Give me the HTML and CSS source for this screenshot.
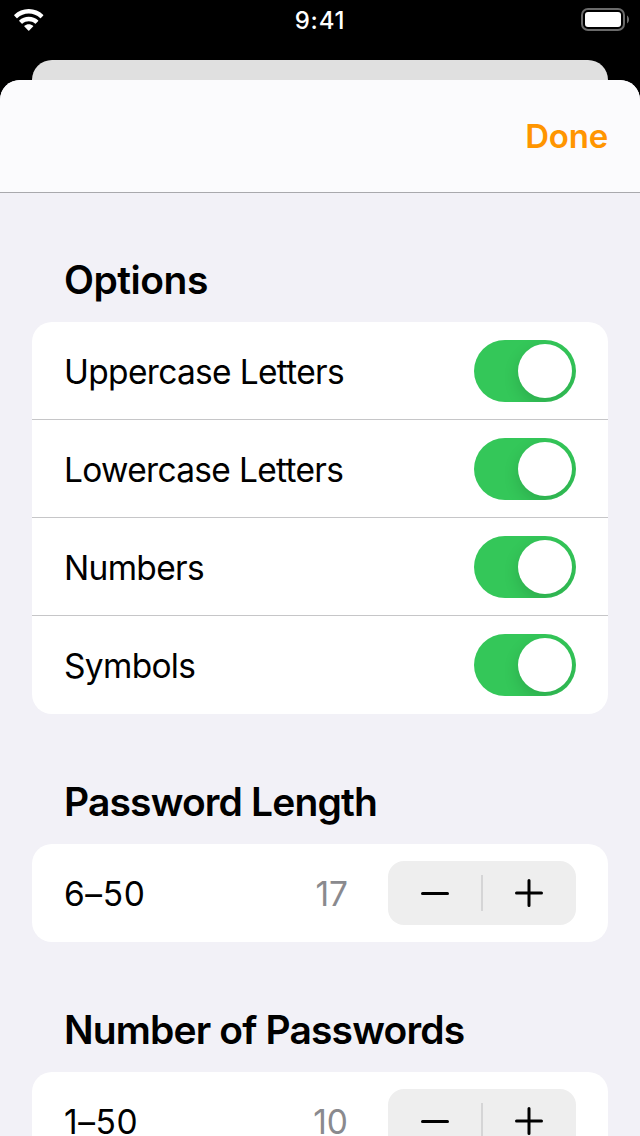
FILE: index.html
```html
<!DOCTYPE html>
<html lang="en">
<head>
  <meta charset="UTF-8">
  <title>Password Options</title>
  <link rel="stylesheet" href="styles.css">
</head>
<body>
  <div class="status-bar">
    <svg class="wifi" width="29.500" height="22" viewBox="0 0 30 22" fill="#fff" preserveAspectRatio="none">
      <path d="M15 0C20.8 0 25.9 2.2 29.6 5.8q.5.5 0 1L27.4 9q-.4.4-.9 0C23.4 6.1 19.4 4.5 15 4.5S6.6 6.1 3.5 9q-.5.4-.9 0L.4 6.8q-.5-.5 0-1C4.1 2.2 9.2 0 15 0z"/>
      <path d="M15 7.7c3.7 0 7 1.3 9.5 3.6q.5.5 0 1l-2.3 2.2q-.4.4-.9 0C19.6 13 17.4 12.2 15 12.2s-4.6.8-6.3 2.3q-.5.4-.9 0l-2.3-2.2q-.5-.5 0-1C8 9 11.3 7.7 15 7.7z"/>
      <path d="M15 15.2c1.7 0 3.2.6 4.4 1.5q.5.4 0 .9l-3.9 3.9q-.5.5-1 0l-3.900-3.900q-.5-.5 0-.9C11.8 15.8 13.3 15.2 15 15.2z"/>
    </svg>
    <span class="time">9:41</span>
    <svg class="battery" width="48" height="23" viewBox="0 0 48 23">
      <rect x="1" y="1" width="42" height="21" rx="6" fill="none" stroke="#6a6a6a" stroke-width="2"/>
      <rect x="4" y="4" width="36" height="15" rx="3" fill="#fff"/>
      <path d="M46 7.5c2.700 1.5 2.700 6.500 0 8z" fill="#6a6a6a"/>
    </svg>
  </div>

  <div class="back-card"></div>

  <div class="sheet">
    <div class="nav">
      <a class="done">Done</a>
    </div>

    <h2 class="title-options">Options</h2>
    <div class="card">
      <div class="row"><span class="label">Uppercase Letters</span><span class="switch"></span></div>
      <div class="row"><span class="label">Lowercase Letters</span><span class="switch"></span></div>
      <div class="row"><span class="label">Numbers</span><span class="switch"></span></div>
      <div class="row"><span class="label">Symbols</span><span class="switch"></span></div>
    </div>

    <h2>Password Length</h2>
    <div class="card">
      <div class="row">
        <span class="label range">6–50</span>
        <span class="value">17</span>
        <div class="stepper">
          <svg width="28" height="28" viewBox="0 0 28 28"><path d="M1.5 14.5h25"/></svg>
          <i class="divider"></i>
          <svg width="28" height="28" viewBox="0 0 28 28"><path d="M1.5 14h25M14 1.5v25"/></svg>
        </div>
      </div>
    </div>

    <h2>Number of Passwords</h2>
    <div class="card">
      <div class="row">
        <span class="label range">1–50</span>
        <span class="value">10</span>
        <div class="stepper">
          <svg width="28" height="28" viewBox="0 0 28 28"><path d="M1.5 14.5h25"/></svg>
          <i class="divider"></i>
          <svg width="28" height="28" viewBox="0 0 28 28"><path d="M1.5 14h25M14 1.5v25"/></svg>
        </div>
      </div>
    </div>
  </div>
</body>
</html>
```
FILE: styles.css
```css
* {
  box-sizing: border-box;
}

body {
  margin: 0;
  height: 1136px;
  overflow: hidden;
  background: #000;
  color: #000;
  font-family: Inter, "Liberation Sans", sans-serif;
}

.status-bar {
  display: grid;
  grid-template-columns: 1fr auto 1fr;
  height: 60px;
  padding: 8px 11px 0 14px;
  color: #fff;
}

.wifi {
  margin-top: 1px;
}

.time {
  margin-right: 3px;
  font-size: 24px;
  font-weight: 500;
  line-height: 26px;
  letter-spacing: 0.8px;
}

.battery {
  justify-self: end;
}

.back-card {
  height: 20px;
  margin: 0 32px;
  border-radius: 20px 20px 0 0;
  background: #e0e0e0;
}

.sheet {
  height: 1056px;
  overflow: hidden;
  border-radius: 20px 20px 0 0;
  background: #f2f1f7;
}

.nav {
  display: flex;
  align-items: center;
  justify-content: flex-end;
  height: 113px;
  padding: 0 32px;
  background: #fbfbfd;
  border-bottom: 1px solid #a9a9ad;
}

.done {
  color: #ff9500;
  font-size: 33px;
  font-weight: 600;
  letter-spacing: -0.2px;
}

h2 {
  margin: 0;
  height: 130px;
  padding: 64px 64px 0;
  font-size: 39px;
  font-weight: 600;
  line-height: 48px;
  letter-spacing: -0.85px;
}

.title-options {
  height: 129px;
  padding-top: 63px;
  letter-spacing: -0.5px;
}

.card {
  margin: 0 32px;
  border-radius: 20px;
  background: #fff;
}

.row {
  display: flex;
  align-items: center;
  height: 98px;
  padding: 0 32px;
  border-bottom: 1px solid #c6c6c8;
}

.row:last-child {
  border-bottom-color: transparent;
}

.label {
  flex: 1;
  padding-top: 2px;
  font-size: 33.5px;
  letter-spacing: -0.68px;
}

.range {
  letter-spacing: 0.6px;
}

.value {
  margin-right: 40px;
  padding-top: 2px;
  color: #8a8a8e;
  font-size: 33.5px;
}

.switch {
  width: 102px;
  height: 62px;
  padding: 4px;
  border-radius: 31px;
  background: #34c759;
  overflow: hidden;
}

.switch::before {
  content: "";
  display: block;
  width: 54px;
  height: 54px;
  margin-left: auto;
  border-radius: 50%;
  background: #fff;
  box-shadow: 0 6px 16px rgba(0, 0, 0, 0.14);
}

.stepper {
  display: flex;
  align-items: center;
  justify-content: space-between;
  width: 188px;
  height: 64px;
  padding: 0 33px;
  border-radius: 16px;
  background: #eeeeee;
}

.stepper svg {
  fill: none;
  stroke: #000;
  stroke-width: 3;
  stroke-linecap: round;
}

.divider {
  width: 2px;
  height: 36px;
  background: #d5d5d6;
}
```
